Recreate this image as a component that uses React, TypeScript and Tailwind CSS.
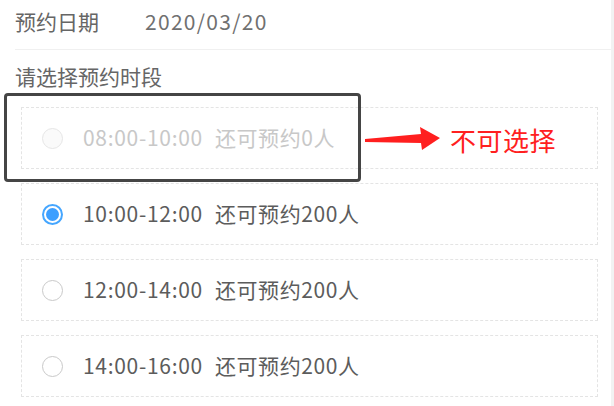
const font = { fontFamily: '"Noto Sans CJK SC", "Noto Sans", sans-serif' };

interface SlotProps {
  time: string;
  left: number;
  disabled?: boolean;
  checked?: boolean;
}

const slots: SlotProps[] = [
  { time: "08:00-10:00", left: 0, disabled: true },
  { time: "10:00-12:00", left: 200, checked: true },
  { time: "12:00-14:00", left: 200 },
  { time: "14:00-16:00", left: 200 },
];

const Radio = ({ disabled, checked }: { disabled?: boolean; checked?: boolean }) => {
  if (checked) {
    return (
      <span className="flex h-[21px] w-[21px] items-center justify-center rounded-full border-2 border-[#45a6ff] bg-white">
        <span className="h-[13px] w-[13px] rounded-full bg-[#3d9fff]" />
      </span>
    );
  }
  return (
    <span
      className={
        disabled
          ? "h-[21px] w-[21px] rounded-full border border-[#e6e6e6] bg-[#fafafa]"
          : "h-[21px] w-[21px] rounded-full border-[1.5px] border-[#c9c9c9] bg-white"
      }
    />
  );
};

export default function App() {
  return (
    <div className="flex h-[406px] w-[614px] bg-white" style={font}>
      <div className="relative w-[611px]">
        {/* header */}
        <div className="ml-[15px] flex h-[50px] items-center border-b border-[#f0f0f0] pb-[6px] text-[21px] text-[#666]">
          <span>预约日期</span>
          <span className="ml-[46px] text-[21px] tracking-[1.3px] text-[#707070]">2020/03/20</span>
        </div>

        <div className="ml-[15px] mt-[10px] text-[21px] leading-[32px] text-[#666]">请选择预约时段</div>

        <div className="ml-[21px] mr-[13px] mt-[15px] flex flex-col gap-[14px]">
          {slots.map((s) => (
            <div
              key={s.time}
              className="flex h-[62px] items-center border border-dashed border-[#e4e4e4] pl-[20px]"
            >
              <Radio disabled={s.disabled} checked={s.checked} />
              <span
                className={
                  "ml-[20px] text-[21px] " + (s.disabled ? "text-[#c8c8c8]" : "text-[#5c5c5c]")
                }
              >
                <span className="tracking-[0.7px]">{s.time}</span>
                <span className="ml-[12px] tracking-[0.6px]">还可预约{s.left}人</span>
              </span>
            </div>
          ))}
        </div>

        {/* annotation */}
        <div className="absolute left-[4px] top-[93px] h-[89px] w-[357px] rounded-[4px] border-[3px] border-[#454545]" />
        <svg className="absolute left-[360px] top-[120px]" width="90" height="36" viewBox="360 120 90 36">
          <polygon
            points="365,139 421,134 420,127 440,138 422,150 421,143 365,142"
            fill="#ff1f1f"
          />
        </svg>
        <div className="absolute left-[450px] top-[122px] text-[26px] leading-[36px] tracking-[0.5px] text-[#ff2020]">
          不可选择
        </div>
      </div>
      <div className="w-[3px] bg-[#f2f2f2]" />
    </div>
  );
}
